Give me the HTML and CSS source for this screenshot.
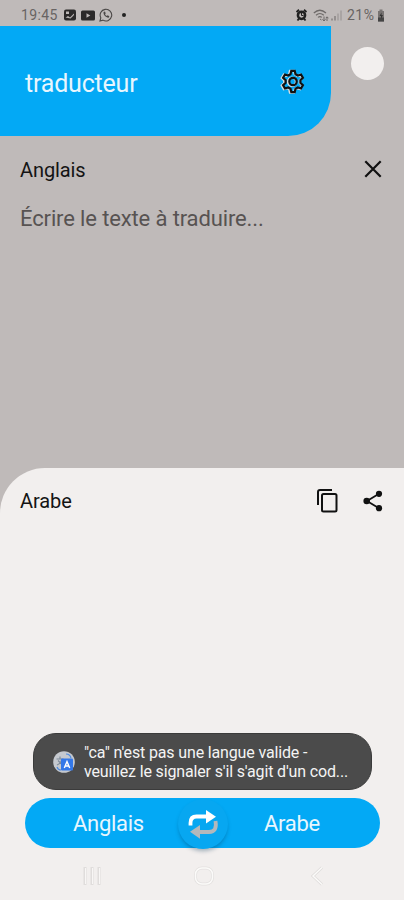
FILE: index.html
```html
<!DOCTYPE html>
<html lang="fr">
<head>
    <meta charset="UTF-8">
    <meta name="viewport" content="width=device-width, initial-scale=1.0">
    <title>traducteur</title>
    <link rel="stylesheet" href="styles.css">
</head>
<body>
    <!-- Status bar -->
    <div class="status-bar">
        <div class="status-left">
            <span class="clock">19:45</span>
            <svg class="icon-image" width="12" height="12" viewBox="0 0 12 12">
                <rect x="0" y="0.5" width="12" height="11" rx="2" fill="#2b2929"/>
                <path d="M2 2.500h3V5H2z" fill="#bdb8b7"/>
                <path d="M1.500 8.500L4 7l2 1.500L10 4.500V6L6.500 9.500z" fill="#bdb8b7"/>
            </svg>
            <svg class="icon-video" width="14" height="11" viewBox="0 0 14 11">
                <rect x="0" y="0.5" width="14" height="10" rx="1.5" fill="#2b2929"/>
                <path d="M5.5 3.3v4.4L9.3 5.5z" fill="#bdb8b7"/>
            </svg>
            <svg class="icon-phone" width="14" height="14" viewBox="0 0 14 14">
                <path d="M1 13l.8-3.2A5.8 5.8 0 1 1 4 12.1z" fill="none" stroke="#4a4746" stroke-width="1.1"/>
                <path d="M4.6 4c-.6 2.800 2.400 6 5.300 5.600l.4-1.400-1.600-.9-.9.8c-.9-.4-1.500-1.100-1.800-1.900l.7-.8L6 3.600z" fill="#4a4746"/>
            </svg>
            <span class="dot"></span>
        </div>
        <div class="status-right">
            <svg class="icon-alarm" width="11" height="12" viewBox="0 0 11 12">
                <path d="M.5 3L3 .8M10.500 3L8 .8M1.500 11.500l1.500-2M9.500 11.500l-1.500-2" stroke="#222" stroke-width="1.800"/>
                <circle cx="5.500" cy="6.300" r="3.600" fill="none" stroke="#222" stroke-width="2.500"/>
                <path d="M5.500 4v2.500h2" fill="none" stroke="#222"/>
            </svg>
            <svg class="icon-wifi" width="16" height="13" viewBox="0 0 16 13">
                <path d="M.8 4Q6.800-1.500 13 4M3 6.200Q6.900 2.800 10.800 6.200M5 8.400Q7 6.800 8.800 8.400" fill="none" stroke="#6d6968" stroke-width="1.200"/>
                <path d="M7 10l1.500 1M11 12V7.500M9.500 10.300L11 12l1.500-1.700M14 12V8M12.800 9.200L14 7.800l1.500 1.500" fill="none" stroke="#6d6968"/>
            </svg>
            <svg class="icon-signal" width="11" height="12" viewBox="0 0 11 12">
                <path d="M1 11.500V9.500M4 11.500V7" stroke="#777372" stroke-width="1.200"/>
                <path d="M7 11.500V4.500M10 11.500V1.500" stroke="#9c9796" stroke-width="1.200"/>
            </svg>
            <span class="battery-text">21%</span>
            <svg class="icon-battery" width="8" height="13" viewBox="0 0 8 13">
                <path d="M2.500.5h3V2H7v10.500H1V2h1.500z" fill="#777372"/>
                <path d="M1 8.500h6v4H1z" fill="#444"/>
                <path d="M4.500 3.500L2.500 7H4v3l2-4H4.500z" fill="#333"/>
            </svg>
        </div>
    </div>

    <!-- Header -->
    <header class="top">
        <div class="app-bar">
            <h1>traducteur</h1>
            <svg class="icon-gear" width="28" height="28" viewBox="0 0 28 28">
                <g class="gear-shine">
                    <path d="M11 3h4l.8 3.300 2.200 1.300 3.200-1 2 3.500-2.400 2.400v2.600l2.400 2.400-2 3.500-3.200-1-2.200 1.300L15 24.600h-4l-.8-3.300L8 20l-3.200 1-2-3.500 2.400-2.400v-2.600L2.800 10.100l2-3.500 3.200 1 2.200-1.300z"/>
                    <circle cx="13" cy="13.800" r="4"/>
                </g>
                <g class="gear-line">
                    <path d="M12.300 2.800h3.400l.8 3.400 2.300 1.300 3.200-1 1.900 3.300-2.500 2.400v2.600l2.500 2.400-1.900 3.300-3.200-1-2.300 1.300-.8 3.400h-3.400l-.8-3.400-2.300-1.300-3.200 1-1.900-3.300 2.500-2.400v-2.600L4.100 9.800 6 6.500l3.200 1 2.300-1.300z"/>
                    <circle cx="14" cy="13.500" r="3.700"/>
                </g>
            </svg>
        </div>
        <div class="round-btn"></div>
    </header>

    <!-- Source text -->
    <section class="source">
        <div class="lang-row">
            <h2>Anglais</h2>
            <svg class="icon-close" width="18" height="18" viewBox="0 0 18 18">
                <path d="M1.300 1.300l15.400 15.400M16.700 1.300L1.300 16.700" stroke="#111" stroke-width="2.200"/>
            </svg>
        </div>
        <p class="placeholder">Écrire le texte à traduire...</p>
    </section>

    <!-- Translated text -->
    <section class="result">
        <div class="lang-row">
            <h2>Arabe</h2>
            <div class="actions">
                <svg width="22" height="26" viewBox="0 0 22 26">
                    <path d="M2 17V4a2 2 0 0 1 2-2H16" fill="none" stroke="#111" stroke-width="2"/>
                    <rect x="6" y="6" width="14.500" height="17.500" rx="1.500" fill="none" stroke="#111" stroke-width="2"/>
                </svg>
                <svg width="20" height="22" viewBox="0 0 20 22">
                    <path d="M16 3.800L4 11l12 7.200" fill="none" stroke="#111" stroke-width="1.800"/>
                    <circle cx="16" cy="3.800" r="3.100" fill="#111"/>
                    <circle cx="3.700" cy="11" r="3.300" fill="#111"/>
                    <circle cx="16" cy="18.200" r="3.100" fill="#111"/>
                </svg>
            </div>
        </div>

        <div class="toast">
            <svg width="22" height="22" viewBox="0 0 22 22">
                <circle cx="11" cy="11" r="10.800" fill="#c5c9cf"/>
                <path d="M3.500 8h7M7 5.500V8M9 8c-.5 3-2.500 5-5 6M5 9.500l4 4" fill="none" stroke="#7d8a99" stroke-width="1.200"/>
                <path d="M13 3q4 0 5 4M4 16q1 3 4 3" fill="none" stroke="#518cdd" stroke-width="1.200"/>
                <rect x="8" y="7.500" width="12" height="12" rx="1" fill="#3478e8"/>
                <path d="M11.300 17L14 10.500l2.700 6.500M12.300 15h3.400" fill="none" stroke="#fff" stroke-width="1.400"/>
            </svg>
            <p>"ca" n'est pas une langue valide -<br>veuillez le signaler s'il s'agit d'un cod...</p>
        </div>

        <div class="lang-bar">
            <span class="lang-from">Anglais</span>
            <div class="swap">
                <svg width="32" height="30" viewBox="0 0 32 30">
                    <path d="M3.500 16.500V14q0-6.500 6-6.500H20" fill="none" stroke="#fff" stroke-width="3.800"/>
                    <path d="M19 1l10 6.700L19 14.500z" fill="#fff"/>
                    <path d="M28.500 12q2 11-6.500 11H12" fill="none" stroke="#b3b8bc" stroke-width="3.800"/>
                    <path d="M13 16L3 22.800l10 7z" fill="#b3b8bc"/>
                </svg>
            </div>
            <span class="lang-to">Arabe</span>
        </div>

        <!-- Phone navigation -->
        <div class="phone-nav">
            <svg width="18" height="20" viewBox="0 0 18 20">
                <path d="M2 1v18M9 1v18M16 1v18" stroke="#e0dddc" stroke-width="3"/>
                <path d="M2.500 2v16M9.500 2v16M16.500 2v16" stroke="#f8f6f5" stroke-width="1"/>
            </svg>
            <svg width="20" height="20" viewBox="0 0 20 20">
                <rect x="1.500" y="2" width="17" height="16" rx="6.500" fill="none" stroke="#e3e0df" stroke-width="3"/>
                <rect x="1.500" y="2" width="17" height="16" rx="6.500" fill="none" stroke="#fbfaf9" stroke-width="1.500"/>
            </svg>
            <svg width="14" height="20" viewBox="0 0 14 20">
                <path d="M12 1.500L3 10l9 8.500" fill="none" stroke="#dedbda" stroke-width="3"/>
                <path d="M12 1.500L3 10l9 8.500" fill="none" stroke="#fbfaf9" stroke-width="1.500"/>
            </svg>
        </div>
    </section>
</body>
</html>
```
FILE: styles.css
```css
* {
    margin: 0;
    padding: 0;
    box-sizing: border-box;
}

body {
    height: 900px;
    display: flex;
    flex-direction: column;
    overflow: hidden;
    font-family: Roboto, sans-serif;
    background-color: #bfbab9;
    color: #141414;
}

svg {
    display: block;
    flex-shrink: 0;
}

/* Status bar */
.status-bar {
    height: 26px;
    padding: 4px 19px 0 21px;
    display: flex;
    justify-content: space-between;
    align-items: center;
    font-size: 14px;
    color: #686463;
}

.status-left, .status-right {
    display: flex;
    align-items: center;
}

.clock {
    width: 43px;
    letter-spacing: 0.4px;
}

.icon-video {
    margin-left: 5px;
}

.icon-phone {
    margin-left: 4px;
}

.dot {
    width: 4px;
    height: 4px;
    margin-left: 9px;
    border-radius: 50%;
    background-color: #222;
}

.icon-wifi {
    margin-left: 6px;
}

.icon-signal {
    margin-left: 2px;
}

.battery-text {
    width: 30px;
    margin-left: 5px;
    letter-spacing: 0.5px;
}

/* Header */
.top {
    height: 110px;
    display: flex;
    justify-content: space-between;
}

.app-bar {
    width: 331px;
    padding: 3px 24px 0 25px;
    display: flex;
    justify-content: space-between;
    align-items: center;
    background-color: #03a9f5;
    border-bottom-right-radius: 43px;
}

.app-bar h1 {
    margin-top: 1px;
    font-size: 25px;
    font-weight: 400;
    letter-spacing: -0.2px;
    color: #e8f6fe;
}

.icon-gear {
    margin-bottom: 1px;
}

.gear-shine {
    fill: none;
    stroke: #d5dde0;
    stroke-width: 2.400;
}

.gear-line {
    fill: none;
    stroke: #111;
    stroke-width: 2.200;
}

.round-btn {
    width: 33px;
    height: 33px;
    margin: 21px 20px 0 0;
    border-radius: 50%;
    background-color: #f2efee;
}

/* Source and result */
.source {
    height: 332px;
    padding: 20px 22px 0 20px;
}

.lang-row {
    height: 28px;
    display: flex;
    justify-content: space-between;
    align-items: center;
}

.lang-row h2 {
    font-size: 20px;
    font-weight: 400;
    letter-spacing: -0.1px;
}

.icon-close {
    margin-bottom: 2px;
}

.placeholder {
    margin-top: 21px;
    font-size: 22px;
    line-height: 28px;
    letter-spacing: -0.13px;
    color: #575352;
}

.result {
    flex: 1;
    display: flex;
    flex-direction: column;
    background-color: #f2efee;
    border-top-left-radius: 45px;
}

.result .lang-row {
    margin: 19px 21px 0 20px;
}

.actions {
    display: flex;
    align-items: center;
    gap: 25px;
}

/* Toast */
.toast {
    width: 339px;
    height: 57px;
    margin: auto 0 8px 33px;
    padding: 1px 0 0 19px;
    display: flex;
    align-items: center;
    border: 1px solid #3b3b3b;
    border-radius: 23px;
    background-color: #4b4b4b;
}

.toast p {
    margin-left: 9px;
    font-size: 16px;
    line-height: 19px;
    letter-spacing: -0.15px;
    white-space: nowrap;
    color: #f4f4f4;
}

/* Language bar */
.lang-bar {
    width: 355px;
    height: 50px;
    margin-left: 25px;
    padding-top: 1px;
    display: flex;
    align-items: center;
    border-radius: 25px;
    background-color: #03a9f5;
    font-size: 22px;
    letter-spacing: -0.3px;
    color: #e8f6fe;
}

.lang-from {
    width: 153px;
    padding-left: 48px;
}

.lang-to {
    margin-left: 36px;
}

.swap {
    width: 50px;
    height: 50px;
    display: flex;
    justify-content: center;
    align-items: center;
    border-radius: 50%;
    background-color: #07a7f1;
    box-shadow: 0 3px 4px -1px rgba(0, 50, 80, 0.35);
}

.phone-nav {
    height: 52px;
    padding: 3px 80px 0 83px;
    display: flex;
    justify-content: space-between;
    align-items: center;
}

.phone-nav svg:nth-child(2) {
    margin-right: 4px;
}
```
